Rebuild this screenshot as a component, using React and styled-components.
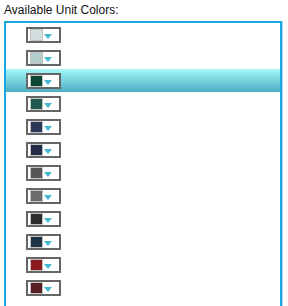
import React from 'react';
import styled, { createGlobalStyle } from 'styled-components';

const GlobalStyle = createGlobalStyle`
  html, body {
    margin: 0;
    padding: 0;
    background: #ffffff;
  }
  body {
    font-family: 'Liberation Sans', Arial, sans-serif;
  }
`;

const Page = styled.div`
  padding: 3px 0 0 4px;
  width: 280px;
  height: 303px;
  overflow: hidden;
`;

const Title = styled.div`
  font-size: 12px;
  line-height: 15px;
  color: #111;
  height: 18px;
`;

const Panel = styled.div`
  border: 2px solid #1aa6de;
  border-bottom: none;
  box-shadow: 1px 0 0 #a8dcf2;
  width: 274px;
  height: 300px;
`;

const Row = styled.div`
  display: flex;
  align-items: center;
  height: 23px;
  padding-left: 20px;
  background: ${({ selected }) =>
    selected ? 'linear-gradient(to bottom, #a6f7fa 0%, #7dd6e2 45%, #4aafc6 100%)' : 'transparent'};
`;

const Picker = styled.div`
  display: flex;
  align-items: center;
  box-sizing: border-box;
  width: 35px;
  height: 16px;
  border: 2px solid #666666;
  background: #ffffff;
  padding-left: 2px;
  margin-top: 1px;
`;

const Swatch = styled.div`
  box-sizing: border-box;
  width: 13px;
  height: 12px;
  border: 1px solid #c4c4c4;
  background: ${({ color }) => color};
`;

const Arrow = styled.div`
  width: 0;
  height: 0;
  margin-left: 1px;
  margin-top: 2px;
  border-left: 4px solid transparent;
  border-right: 4px solid transparent;
  border-top: 5px solid #45b6d0;
`;

const colors = [
  '#d3dfdf',
  '#b4cccc',
  '#0a4630',
  '#1e5a4e',
  '#2b3558',
  '#232c45',
  '#545658',
  '#6c6c6c',
  '#2c2c2e',
  '#1e3444',
  '#8b1a1f',
  '#5a1f25',
];

function App() {
  return (
    <Page>
      <GlobalStyle />
      <Title>Available Unit Colors:</Title>
      <Panel>
        {colors.map((c, i) => (
          <Row key={c} selected={i === 2}>
            <Picker>
              <Swatch color={c} />
              <Arrow />
            </Picker>
          </Row>
        ))}
      </Panel>
    </Page>
  );
}

export default App;
